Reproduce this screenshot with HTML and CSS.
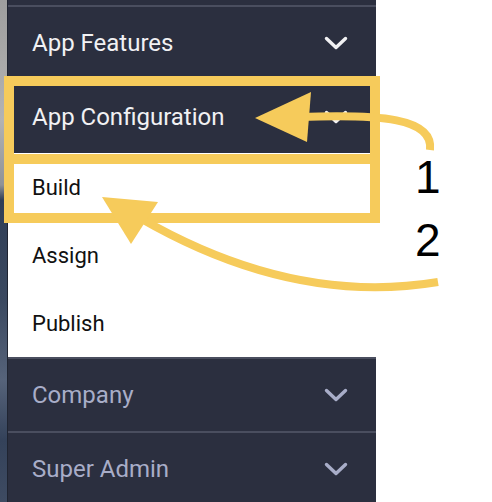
FILE: index.html
```html
<!DOCTYPE html>
<html>
<head>
<meta charset="utf-8">
<link rel="stylesheet" href="styles.css">
</head>
<body>
<div class="page">
  <div class="backdrop"></div>
  <nav class="sidebar">
    <div class="top-stub"></div>
    <div class="section-head open">
      <span>App Features</span>
      <svg class="chev" viewBox="0 0 24 14"><polyline points="2.5,2.5 12,11.5 21.5,2.5"/></svg>
    </div>
    <div class="section-head open active">
      <span>App Configuration</span>
      <svg class="chev" viewBox="0 0 24 14"><polyline points="2.5,2.5 12,11.5 21.5,2.5"/></svg>
    </div>
    <div class="submenu">
      <div class="sub-item">Build</div>
      <div class="sub-item">Assign</div>
      <div class="sub-item">Publish</div>
    </div>
    <div class="section-head closed">
      <span>Company</span>
      <svg class="chev" viewBox="0 0 24 14"><polyline points="2.5,2.5 12,11.5 21.5,2.5"/></svg>
    </div>
    <div class="section-head closed">
      <span>Super Admin</span>
      <svg class="chev" viewBox="0 0 24 14"><polyline points="2.5,2.5 12,11.5 21.5,2.5"/></svg>
    </div>
  </nav>
  <div class="blank"></div>

  <svg class="annotations" width="492" height="502" viewBox="0 0 492 502">
    <rect class="box" x="9" y="81" width="366" height="78"/>
    <rect class="box" x="9" y="159" width="366" height="59"/>
    <path class="shaft" d="M 430 150 C 434 118 380 114 300 117"/>
    <polygon class="head" points="255,118 311,92 307,142"/>
    <path class="shaft" d="M 438 282 C 330 300 230 270 140 218"/>
    <polygon class="head" points="102,197 158,202 131,244"/>
    <text class="num" x="415" y="193">1</text>
    <text class="num" x="415" y="256">2</text>
  </svg>
</div>
</body>
</html>
```

FILE: styles.css
```css
* { box-sizing: border-box; }
html, body { margin: 0; padding: 0; background: #fff; }
.page {
  position: relative;
  width: 492px;
  height: 502px;
  display: flex;
  overflow: hidden;
  font-family: Roboto, "Liberation Sans", sans-serif;
}
.backdrop {
  width: 7px;
  flex: none;
  background: linear-gradient(180deg, #9e9e9e 0px, #b3b3b3 120px, #8f9297 185px, #2f3e56 200px, #3b4960 300px, #56637a 380px, #34425a 440px, #3e4b62 502px);
}
.sidebar {
  width: 369px;
  flex: none;
  border-left: 1px solid #1f2431;
  background: #2b2f3f;
  display: flex;
  flex-direction: column;
}
.sidebar > * { flex: none; }
.top-stub {
  height: 7px;
  border-bottom: 2px solid #4a4e5f;
}
.section-head {
  height: 74px;
  display: flex;
  align-items: center;
  justify-content: space-between;
  padding: 0 28px 0 24px;
  font-size: 24px;
  border-bottom: 2px solid #4a4e5f;
}
.section-head.open { color: #f1f1f3; }
.section-head.open .chev polyline { stroke: #f1f1f3; }
.section-head.closed { color: #a8adc8; }
.section-head.closed .chev polyline { stroke: #a8adc8; }
.section-head.active { border-bottom: none; height: 72px; }
.chev { width: 24px; height: 14px; display: block; flex: none; }
.chev polyline { fill: none; stroke-width: 3.4; stroke-linecap: round; stroke-linejoin: round; }
.submenu {
  background: #fff;
  display: flex;
  flex-direction: column;
  border-bottom: 2px solid #4a4e5f;
}
.sub-item {
  height: 68px;
  flex: none;
  display: flex;
  align-items: center;
  padding-left: 24px;
  font-size: 22px;
  color: #111;
}
.blank { flex: 1; background: #fff; }
.annotations {
  position: absolute;
  left: 0;
  top: 0;
  pointer-events: none;
}
.box { fill: none; stroke: #f6cb5b; stroke-width: 10; }
.shaft { fill: none; stroke: #f6cb5b; stroke-width: 8; }
.head { fill: #f6cb5b; }
.num { font-family: "Liberation Sans", Arial, sans-serif; font-size: 46px; fill: #000; }
```
